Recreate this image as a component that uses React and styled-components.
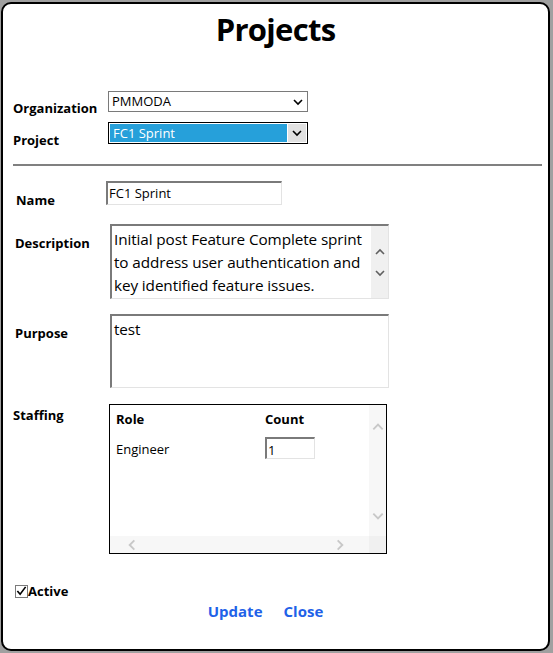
import React from 'react';
import styled, { createGlobalStyle } from 'styled-components';

const Global = createGlobalStyle`
	html, body {
		margin: 0;
		padding: 0;
		background: #a0a0a0;
	}
	body {
		font-family: 'Open Sans', 'Noto Sans', sans-serif;
		color: #000;
	}
`;

const Chevron = ({ dir = 'down', color = '#000', size = 12 }) => {
	const d = {
		down: 'M2 4 L6 8 L10 4',
		up: 'M2 8 L6 4 L10 8',
		left: 'M8 2 L4 6 L8 10',
		right: 'M4 2 L8 6 L4 10',
	}[dir];
	return (
		<svg width={size} height={size} viewBox="0 0 12 12">
			<path d={d} fill="none" stroke={color} strokeWidth="1.6" />
		</svg>
	);
};

const App = () => {
	return (
		<>
			<Global />
			<Frame>
				<Title>Projects</Title>
				<PickRows>
					<PickRow>
						<PickLabel>Organization</PickLabel>
						<Select>
							<SelectText>PMMODA</SelectText>
							<Arrow>
								<Chevron />
							</Arrow>
						</Select>
					</PickRow>
					<PickRow>
						<PickLabel>Project</PickLabel>
						<Select $active>
							<SelectText $active>FC1 Sprint</SelectText>
							<Arrow $active>
								<Chevron />
							</Arrow>
						</Select>
					</PickRow>
				</PickRows>
				<Rule />
				<Form>
					<FieldRow $top={15}>
						<FieldLabel $pad={3} $drop={11}>Name</FieldLabel>
						<NameInput>FC1 Sprint</NameInput>
					</FieldRow>
					<FieldRow $top={19}>
						<FieldLabel $pad={2} $drop={11}>Description</FieldLabel>
						<TextBox $h={75}>
							<TextBody>
								Initial post Feature Complete sprint to address user authentication and key
								identified feature issues.
							</TextBody>
							<VScroll>
								<Chevron dir="up" color="#606060" />
								<Chevron dir="down" color="#606060" />
							</VScroll>
						</TextBox>
					</FieldRow>
					<FieldRow $top={15}>
						<FieldLabel $pad={2} $drop={11}>Purpose</FieldLabel>
						<TextBox $h={74}>
							<TextBody>test</TextBody>
						</TextBox>
					</FieldRow>
					<FieldRow $top={16}>
						<FieldLabel $pad={0} $drop={3}>Staffing</FieldLabel>
						<Grid>
							<GridMain>
								<GridCells>
									<HeadCell>Role</HeadCell>
									<HeadCell>Count</HeadCell>
									<Cell>Engineer</Cell>
									<Cell>
										<CountInput>1</CountInput>
									</Cell>
								</GridCells>
								<GridVScroll>
									<Chevron dir="up" color="#c8c8c8" size={14} />
									<Chevron dir="down" color="#c8c8c8" size={14} />
								</GridVScroll>
							</GridMain>
							<GridHScroll>
								<HBar>
									<Chevron dir="left" color="#c8c8c8" size={14} />
									<Chevron dir="right" color="#c8c8c8" size={14} />
								</HBar>
								<Corner />
							</GridHScroll>
						</Grid>
					</FieldRow>
				</Form>
				<ActiveRow>
					<Check>
						<svg width="12" height="12" viewBox="0 0 12 12">
							<path d="M1.5 6 L4.5 9.5 L10.5 1.5" fill="none" stroke="#000" strokeWidth="1.8" />
						</svg>
					</Check>
					<ActiveLabel>Active</ActiveLabel>
				</ActiveRow>
				<Actions>
					<LinkButton>Update</LinkButton>
					<LinkButton>Close</LinkButton>
				</Actions>
			</Frame>
		</>
	);
};

export default App;

const Frame = styled.div`
	box-sizing: border-box;
	width: 549px;
	height: 649px;
	margin: 2px 3px 2px 1px;
	border: 2px solid #000;
	border-radius: 10px;
	background: #fff;
	display: flex;
	flex-direction: column;
`;
const Title = styled.h1`
	margin: 0;
	padding-top: 6px;
	font-size: 31px;
	font-weight: 700;
	line-height: 38px;
	text-align: center;
	letter-spacing: -0.7px;
`;
const PickRows = styled.div`
	display: flex;
	flex-direction: column;
	gap: 10px;
	margin-top: 43px;
	padding-left: 10px;
`;
const PickRow = styled.div`
	display: grid;
	grid-template-columns: 95px 200px;
	align-items: end;
`;
const PickLabel = styled.div`
	font-size: 13px;
	font-weight: 700;
	line-height: 16px;
	margin-bottom: -4px;
`;
const Select = styled.div`
	box-sizing: border-box;
	display: flex;
	height: ${(p) => (p.$active ? 22 : 21)}px;
	border: 1px solid ${(p) => (p.$active ? '#000' : '#7a7a7a')};
	background: #fff;
	padding: ${(p) => (p.$active ? '1px' : '0')};
`;
const SelectText = styled.div`
	flex: 1;
	font-size: 13px;
	line-height: 18px;
	padding-left: 3px;
	background: ${(p) => (p.$active ? '#26a0da' : 'transparent')};
	color: ${(p) => (p.$active ? '#fff' : '#000')};
`;
const Arrow = styled.div`
	width: 18px;
	display: flex;
	align-items: center;
	justify-content: center;
	background: ${(p) => (p.$active ? '#e1e1e1' : 'transparent')};
	border-left: ${(p) => (p.$active ? '1px solid #fff' : 'none')};
`;
const Rule = styled.div`
	height: 2px;
	background: #808080;
	margin: 20px 6px 0 10px;
`;
const Form = styled.div`
	display: flex;
	flex-direction: column;
	padding-left: 10px;
`;
const FieldRow = styled.div`
	display: grid;
	grid-template-columns: 95px 1fr;
	align-items: start;
	margin-top: ${(p) => p.$top}px;
`;
const FieldLabel = styled.div`
	font-size: 13px;
	font-weight: 700;
	line-height: 16px;
	height: 0;
	overflow: visible;
	white-space: nowrap;
	padding-left: ${(p) => p.$pad}px;
	margin-top: ${(p) => p.$drop}px;
`;
const NameInput = styled.div`
	box-sizing: border-box;
	width: 176px;
	height: 24px;
	margin-left: -2px;
	border: 1px solid #e3e3e3;
	border-top: 2px solid #7a7a7a;
	border-left: 2px solid #7a7a7a;
	font-size: 13px;
	line-height: 20px;
	padding-left: 1px;
`;
const TextBox = styled.div`
	box-sizing: border-box;
	display: flex;
	width: 279px;
	height: ${(p) => p.$h}px;
	margin-left: 2px;
	border: 1px solid #e3e3e3;
	border-top: 2px solid #7a7a7a;
	border-left: 2px solid #7a7a7a;
`;
const TextBody = styled.div`
	flex: 1;
	font-size: 15.3px;
	line-height: 23px;
	padding: 2px 0 0 2px;
	letter-spacing: -0.1px;
`;
const VScroll = styled.div`
	width: 17px;
	background: #f0f0f0;
	display: flex;
	flex-direction: column;
	align-items: center;
	justify-content: center;
	gap: 9px;
`;
const Grid = styled.div`
	box-sizing: border-box;
	width: 278px;
	height: 150px;
	margin-left: 1px;
	border: 1px solid #000;
	display: flex;
	flex-direction: column;
`;
const GridMain = styled.div`
	flex: 1;
	display: flex;
`;
const GridCells = styled.div`
	flex: 1;
	display: grid;
	grid-template-columns: 149px 1fr;
	grid-auto-rows: min-content;
	padding: 5px 0 0 6px;
	row-gap: 9px;
`;
const HeadCell = styled.div`
	font-size: 13px;
	font-weight: 700;
	line-height: 18px;
`;
const Cell = styled.div`
	font-size: 13px;
	line-height: 18px;
	padding-top: 3px;
`;
const CountInput = styled.div`
	box-sizing: border-box;
	width: 50px;
	height: 22px;
	margin-top: -3px;
	border: 1px solid #e3e3e3;
	border-top: 2px solid #7a7a7a;
	border-left: 2px solid #7a7a7a;
	font-size: 13px;
	line-height: 22px;
	padding-left: 1px;
`;
const GridVScroll = styled.div`
	width: 17px;
	background: #f7f7f7;
	display: flex;
	flex-direction: column;
	align-items: center;
	justify-content: space-between;
	padding: 15px 0 13px;
`;
const GridHScroll = styled.div`
	height: 17px;
	display: flex;
`;
const HBar = styled.div`
	flex: 1;
	background: #f7f7f7;
	display: flex;
	align-items: center;
	justify-content: space-between;
	padding: 0 22px 0 15px;
`;
const Corner = styled.div`
	width: 17px;
	background: #f0f0f0;
`;
const ActiveRow = styled.div`
	display: flex;
	align-items: center;
	margin-top: 29px;
	padding-left: 12px;
`;
const Check = styled.div`
	box-sizing: border-box;
	width: 13px;
	height: 13px;
	border: 1px solid #7a7a7a;
	display: flex;
	align-items: center;
	justify-content: center;
`;
const ActiveLabel = styled.span`
	font-size: 13px;
	font-weight: 700;
	line-height: 16px;
`;
const Actions = styled.div`
	display: flex;
	justify-content: center;
	gap: 21px;
	margin-top: 2px;
	padding-right: 20px;
`;
const LinkButton = styled.a`
	font-size: 15px;
	font-weight: 700;
	color: #1f62e8;
	text-decoration: none;
	cursor: pointer;
`;
